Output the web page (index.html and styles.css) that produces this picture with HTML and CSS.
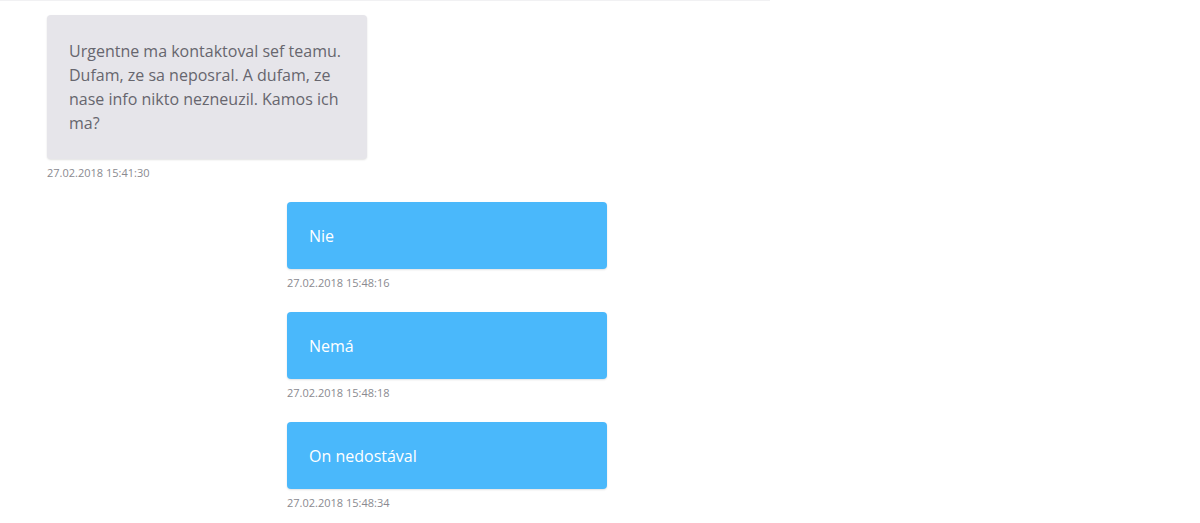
FILE: index.html
```html
<!DOCTYPE html>
<html lang="sk">
<head>
<meta charset="utf-8">
<title>Chat</title>
<link rel="stylesheet" href="styles.css">
</head>
<body>
<div class="chat">
  <div class="thread">
    <div class="msg received">
      <div class="bubble">Urgentne ma kontaktoval sef teamu. Dufam, ze sa neposral. A dufam, ze nase info nikto nezneuzil. Kamos ich ma?</div>
      <div class="time">27.02.2018 15:41:30</div>
    </div>
    <div class="msg sent">
      <div class="bubble">Nie</div>
      <div class="time">27.02.2018 15:48:16</div>
    </div>
    <div class="msg sent">
      <div class="bubble">Nemá</div>
      <div class="time">27.02.2018 15:48:18</div>
    </div>
    <div class="msg sent">
      <div class="bubble">On nedostával</div>
      <div class="time">27.02.2018 15:48:34</div>
    </div>
  </div>
</div>
</body>
</html>
```
FILE: styles.css
```css
html, body {
  margin: 0;
  padding: 0;
  background: #ffffff;
}
body {
  font-family: "Open Sans", "Noto Sans", sans-serif;
}
.chat {
  width: 770px;
  border-top: 1px solid #f1f1f3;
  padding: 14px 0 0 47px;
  box-sizing: border-box;
}
.thread {
  width: 560px;
  display: flex;
  flex-direction: column;
}
.msg {
  width: 320px;
  display: flex;
  flex-direction: column;
  margin-bottom: 21px;
}
.msg.received { align-self: flex-start; }
.msg.sent { align-self: flex-end; }
.bubble {
  border-radius: 4px;
  font-size: 16px;
  line-height: 24px;
  box-shadow: 0 1px 2px rgba(0, 0, 0, 0.12);
}
.received .bubble {
  background: #e6e5ea;
  color: #67666e;
  padding: 24px 22px;
}
.sent .bubble {
  background: #4ab8fb;
  color: #ffffff;
  padding: 22px 22px 21px;
}
.time {
  margin-top: 6px;
  font-size: 11px;
  line-height: 16px;
  color: #8a8a90;
}
```
